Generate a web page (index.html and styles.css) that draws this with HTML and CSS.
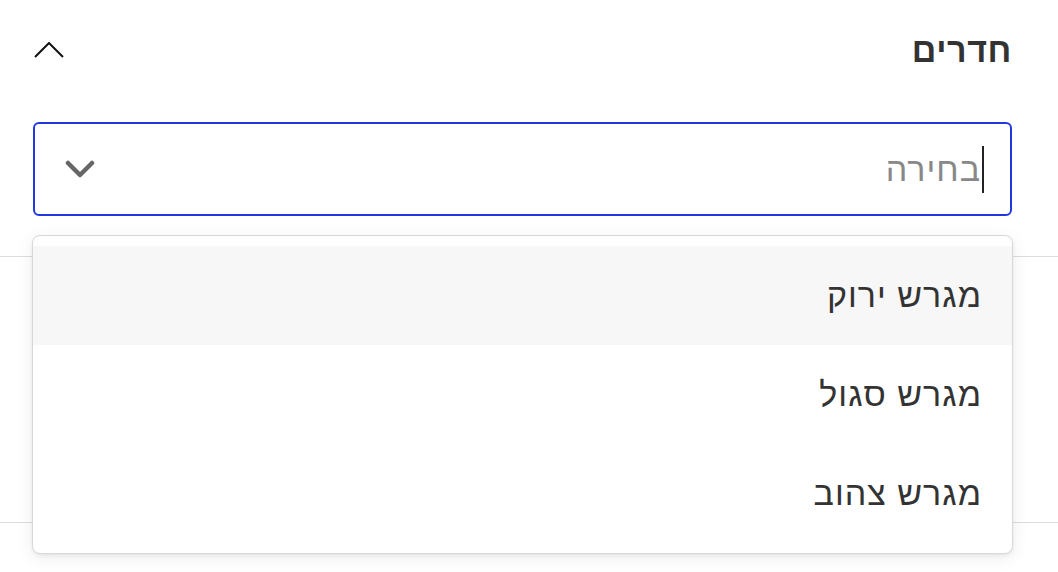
FILE: index.html
```html
<!DOCTYPE html>
<html lang="he" dir="rtl">
<head>
    <meta charset="UTF-8">
    <meta name="viewport" content="width=device-width, initial-scale=1.0">
    <title>חדרים</title>
    <link rel="stylesheet" href="styles.css">
</head>
<body>
    <div class="filter">
        <div class="filter-head">
            <h2 class="filter-title">חדרים</h2>
            <svg class="toggle" width="30" height="16" viewBox="0 0 30 16">
                <polyline points="1,15 15,1 29,15" fill="none" stroke="#111" stroke-width="2"/>
            </svg>
        </div>
        <div class="select-box">
            <span class="caret"></span>
            <span class="placeholder">בחירה</span>
            <svg class="arrow" width="30" height="18" viewBox="0 0 30 18">
                <polyline points="3,3 15,15 27,3" fill="none" stroke="#666" stroke-width="4.5" stroke-linecap="round" stroke-linejoin="round"/>
            </svg>
        </div>
        <!-- רשימת האפשרויות פתוחה מעל התוכן -->
        <ul class="menu">
            <li class="menu-item active">מגרש ירוק</li>
            <li class="menu-item">מגרש סגול</li>
            <li class="menu-item">מגרש צהוב</li>
        </ul>
    </div>
    <div class="rows">
        <div class="row"></div>
    </div>
</body>
</html>
```

FILE: styles.css
```css
* {
    margin: 0;
    padding: 0;
    box-sizing: border-box;
}
body {
    font-family: 'Liberation Sans', Arial, 'Noto Sans', sans-serif;
    background: #fff;
    color: #333;
    direction: rtl;
    min-height: 100vh;
}
.filter {
    position: relative;
    z-index: 1;
    padding: 28px 46px 0 33px;
}
.filter-head {
    display: flex;
    justify-content: space-between;
    align-items: center;
    height: 44px;
}
.filter-title {
    font-size: 34px;
    font-weight: 600;
    letter-spacing: 0.6px;
    color: #333;
}
.toggle {
    margin-left: 1px;
}
.select-box {
    display: flex;
    align-items: center;
    height: 94px;
    margin-top: 50px;
    padding: 0 26px 0 30px;
    border: 2px solid #2137e0;
    border-radius: 6px;
}
.caret {
    width: 2px;
    height: 47px;
    background: #222;
    margin-left: 1px;
}
.placeholder {
    flex: 1;
    font-size: 34px;
    letter-spacing: 1px;
    color: #888;
}
.arrow {
    display: block;
}
.menu {
    position: absolute;
    top: 235px;
    left: 32px;
    right: 45px;
    list-style: none;
    padding: 10px 0;
    background: #fff;
    border: 1px solid #d8d8d8;
    border-radius: 8px;
    box-shadow: 0 2px 4px rgba(0, 0, 0, 0.06), 0 4px 18px rgba(0, 0, 0, 0.07);
}
.menu-item {
    height: 99px;
    display: flex;
    align-items: center;
    padding-right: 30px;
    font-size: 34px;
    letter-spacing: 1px;
    color: #333;
}
.menu-item.active {
    background: #f7f7f7;
}
.rows {
    margin-top: 40px;
    border-top: 1px solid #ddd;
}
.row {
    height: 266px;
    border-bottom: 1px solid #ddd;
}
```
